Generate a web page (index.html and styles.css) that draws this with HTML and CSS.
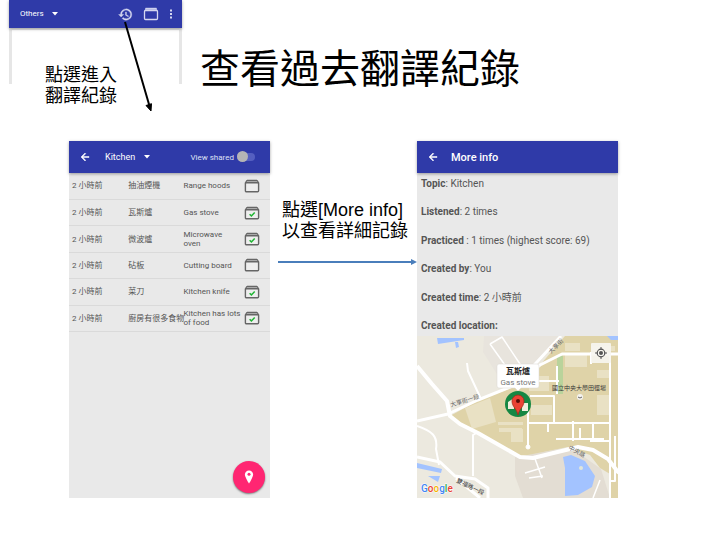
FILE: index.html
```
<!DOCTYPE html>
<html lang="zh-Hant">
<head>
<meta charset="utf-8">
<meta name="viewport" content="width=device-width, initial-scale=1">
<title>查看過去翻譯紀錄</title>
<link rel="stylesheet" href="styles.css">
</head>
<body>
<svg class="defs" width="0" height="0" aria-hidden="true">
  <symbol id="caret" viewBox="0 0 6 4"><path d="M0 0h6L3 3.600z" fill="#fff"/></symbol>
  <symbol id="back" viewBox="0 0 24 24"><path d="M20 11H7.830l5.590-5.590L12 4l-8 8 8 8 1.410-1.410L7.830 13H20z" fill="#fff" stroke="#fff"/></symbol>
  <symbol id="box" viewBox="0 0 16 14"><path d="M3 1h10l1 3H2z" fill="#aaa"/><path d="M3 1.300h10M3 1.300L1.500 3.700h13L13 1.300" fill="none" stroke="#666" stroke-width="1.200"/><rect x="1.400" y="3.700" width="13.200" height="9" rx="1" fill="#eee" stroke="#666" stroke-width="1.400"/></symbol>
  <symbol id="box-done" viewBox="0 0 16 14"><use href="#box"/><path d="M5.600 8.200l1.800 1.700 3.300-3.400" fill="none" stroke="#20b534" stroke-width="1.500"/></symbol>
</svg>
<div class="slide">
  <header class="top">
    <section class="snippet">
      <div class="bar bar-small">
        <label class="picker picker-small"><select aria-label="Topic"><option>Others</option></select><svg class="caret"><use href="#caret"/></svg></label>
        <button class="icon-btn" aria-label="History"><svg class="history" viewBox="0 0 24 24"><path d="M13 3a9 9 0 0 0-9 9H1l4 4 4-4H6a7 7 0 1 1 2.060 4.940l-1.420 1.420A9 9 0 1 0 13 3zm-1 5v5l4.280 2.540.720-1.210-3.500-2.080V8z" fill="#d5d7f0" stroke="#d5d7f0" stroke-width=".6"/></svg></button>
        <button class="icon-btn" aria-label="Cards"><svg class="cards" viewBox="0 0 16 14"><path d="M2.500 1h11l1.200 3H1.300z" fill="#aeb2e3"/><path d="M2.500 1.300h11" stroke="#d5d7f0"/><rect x="1.500" y="3.500" width="13" height="9" rx="1" fill="none" stroke="#d5d7f0" stroke-width="1.300"/></svg></button>
        <button class="icon-btn" aria-label="More"><svg class="dots" viewBox="0 0 4 12"><path d="M1 1.500h2v2H1zM1 5h2v2H1zM1 8.500h2v2H1z" fill="#d5d7f0"/></svg></button>
      </div>
      <div class="snippet-body"><p class="note">點選進入<br>翻譯紀錄</p></div>
      <svg class="pointer" viewBox="0 0 32 94" aria-hidden="true"><path d="M2 1L26.500 85" stroke="#000" stroke-width="2"/><path d="M28 90l-5-5.500 5.500-1.800z" stroke="#000"/></svg>
    </section>
    <h1>查看過去翻譯紀錄</h1>
  </header>

  <main class="stage">
    <section class="phone">
      <div class="bar">
        <button class="icon-btn" aria-label="Back"><svg class="back"><use href="#back"/></svg></button>
        <label class="picker"><select aria-label="Topic"><option>Kitchen</option></select><svg class="caret"><use href="#caret"/></svg></label>
        <label class="shared">View shared<input type="checkbox"></label>
      </div>
      <table>
        <tbody>
          <tr><td>2 小時前</td><td>抽油煙機</td><td>Range hoods</td><td><svg class="box"><use href="#box"/></svg></td></tr>
          <tr><td>2 小時前</td><td>瓦斯爐</td><td>Gas stove</td><td><svg class="box"><use href="#box-done"/></svg></td></tr>
          <tr><td>2 小時前</td><td>微波爐</td><td>Microwave<br>oven</td><td><svg class="box"><use href="#box-done"/></svg></td></tr>
          <tr><td>2 小時前</td><td>砧板</td><td>Cutting board</td><td><svg class="box"><use href="#box"/></svg></td></tr>
          <tr><td>2 小時前</td><td>菜刀</td><td>Kitchen knife</td><td><svg class="box"><use href="#box-done"/></svg></td></tr>
          <tr><td>2 小時前</td><td>廚房有很多食物</td><td>Kitchen has lots<br>of food</td><td><svg class="box"><use href="#box-done"/></svg></td></tr>
        </tbody>
      </table>
      <button class="fab" aria-label="Show on map"><svg viewBox="0 0 10 14"><path d="M5 .5C2.600.5.900 2.300.900 4.500.900 7.300 5 13.500 5 13.500S9.100 7.300 9.100 4.500C9.100 2.300 7.400.5 5 .5z" fill="#fff"/><circle cx="5" cy="4.300" r="1.500" fill="#ff2672"/></svg></button>
    </section>

    <div class="step">
      <p class="note">點選[More info]<br>以查看詳細記錄</p>
      <div class="arrow" aria-hidden="true"></div>
    </div>

    <section class="phone">
      <div class="bar">
        <button class="icon-btn" aria-label="Back"><svg class="back"><use href="#back"/></svg></button>
        <h2>More info</h2>
      </div>
      <div class="info">
        <p><b>Topic</b>: Kitchen</p>
        <p><b>Listened</b>: 2 times</p>
        <p><b>Practiced</b> : 1 times (highest score: 69)</p>
        <p><b>Created by</b>: You</p>
        <p><b>Created time</b>: 2 小時前</p>
        <p><b>Created location:</b></p>
      </div>
      <svg class="map" viewBox="0 0 201 162" role="img" aria-label="Map">
        <rect width="201" height="162" fill="#ece9df"/>
        <path d="M67 0h75l-20 27-34 24-22-35z" fill="#e8e4dd"/>
        <path d="M98 121l55-10 31 22 9 29H106l-8-22z" fill="#e3ddd3"/>
        <path d="M33 80l29-16 38-14 23-21L148 0h53v162h-8v-24l-10-6-10-13-22-8-45 9-13-3-33-20-17-10z" fill="#dfd3a8"/>
        <path d="M48 72l25-10 6 24-24 7z" fill="#e9e1c4"/>
        <path d="M20 2h27v2L21 8zM38 6h3l1 5-3 1z" fill="#a3c3ff"/>
        <path d="M0 127l25 6-1 4-24-5zM11 140h12l-2 6z" fill="#a3c3ff"/>
        <path d="M146 121l8-2 14 6 10 15-3 11-14 8-13 1V132z" fill="#a3c3ff"/>
        <circle cx="164" cy="132" r="2" fill="#dfe5dc"/>
        <path d="M140 20h6v38h-6z" fill="#b9d39b"/>
        <path d="M190 0h11v4h-7z" fill="#a3c3ff"/>
        <g fill="#e9e1c4">
          <path d="M148 19h22v12h-22zM148 7h15v8h-15zM180 34h12v8h-12zM180 59h12v20h-12zM112 40h20v15h-20zM174 10h24v5h-24z"/>
          <path d="M81 86h25v3H81zM82 92h23v4H82zM94 93h12v13H94zM114 69h21v10h-21z"/>
        </g>
        <g fill="none" stroke="#fff" stroke-linejoin="round">
          <path d="M111 45h31M113 60h24v27M140 30v28M174 16v12M156 85v20M176 86v17M139 103h48M193 17v130M193 87h-40M193 105h-20M111 62v48M110 87h65M131 86v10M163 92v10M193 138v24M198 100v45h-6M180 116l10 6" stroke-width="2"/>
          <circle cx="111" cy="111" r="2" fill="#fff"/>
          <path d="M73 8l12-7 20 30M73 8l20 28M117 120l8 22M108 137l20-6M112 142l14-2M183 144l-7 18" stroke-width="1.500"/>
          <path d="M50 27l1 8 13 28M56 140V99l5-3M0 90c15 5 21 10 19 23l3 16" stroke-width="2"/>
          <path d="M0 30l15 18 15 17 3 15 10 8 18 9 42 24 13 1 45-11 15 3 15 9 10 13 9 5" stroke-width="4"/>
          <path d="M0 85l31-7 30-14 37-15 22-23L144 0M101 47l22-18 22-11h56M0 121l23 5 15 14 20 3 13 9v10M39 142l12 10 12 10" stroke-width="3"/>
        </g>
        <g class="map-text">
          <text transform="translate(34 71) rotate(-17)">大享街一段</text>
          <text transform="translate(134 18) rotate(-45)">大享街</text>
          <text transform="translate(151 113) rotate(28)">中央路</text>
          <text class="dark" transform="translate(39 146) rotate(26)">雙福路一段</text>
          <text class="dark" x="135" y="54">國立中央大學田徑場</text>
        </g>
        <circle cx="163" cy="61" r="3" fill="#f5f3ef"/><path d="M161 61l2 1 2-1" fill="none" stroke="#666"/>
        <circle cx="101" cy="68" r="13" fill="#168743"/>
        <path d="M91 66l6-4v11h-6zM105 67h6v8h-6z" fill="#f0eddd"/>
        <path d="M101 79c-1-6-6-8-6-14a6 6 0 0 1 12 0c0 6-5 8-6 14z" fill="#ea4335" stroke="#a52714" stroke-width=".7"/><circle cx="101" cy="65" r="2" fill="#5a0c08"/>
        <path d="M82 28h38a2 2 0 0 1 2 2v20a2 2 0 0 1-2 2h-16l-3 3-3-3H82a2 2 0 0 1-2-2V30a2 2 0 0 1 2-2z" fill="#fff" stroke="#d8d6d0" stroke-width=".5"/>
        <text class="pin-title" x="101" y="38">瓦斯爐</text>
        <text class="pin-sub" x="101" y="49">Gas stove</text>
        <rect x="174" y="7" width="20" height="20" rx="1" fill="#f7f6f1" opacity=".9"/>
        <g fill="none" stroke="#555"><circle cx="184" cy="17" r="3.800" stroke-width="1.200"/><path d="M184 11v3M184 20v3M178 17h3M187 17h3"/></g><circle cx="184" cy="17" r="2" fill="#555"/>
        <text class="google" x="4" y="156"><tspan fill="#4285f4">G</tspan><tspan fill="#ea4335">o</tspan><tspan fill="#f4b400">o</tspan><tspan fill="#4285f4">g</tspan><tspan fill="#34a853">l</tspan><tspan fill="#ea4335">e</tspan></text>
      </svg>
    </section>
  </main>
</div>
</body>
</html>
```
FILE: styles.css
```
* { box-sizing: border-box; }
body {
  margin: 0;
  background: #fff;
  color: #000;
  font-family: "Liberation Sans", "Noto Sans CJK TC", sans-serif;
}
h1, h2, p { margin: 0; }
button { border: 0; padding: 0; background: none; cursor: pointer; }
svg { display: block; }
.defs { position: absolute; }

.top {
  display: grid;
  grid-template-columns: 9fr 173fr 18fr 520fr;
  min-height: 141px;
  align-items: start;
}
.snippet { grid-column: 2; position: relative; }
.top h1 {
  grid-column: 4;
  padding-top: 39px;
  font-size: 40px;
  line-height: 60px;
  font-weight: 400;
}
.note { font-size: 18px; line-height: 21px; white-space: nowrap; }
.snippet-body {
  height: 56px;
  padding: 35px 0 0 33px;
  border: solid #e6e6e6;
  border-width: 2px 3px 0;
}
.pointer { position: absolute; left: 114px; top: 21px; width: 32px; height: 94px; }

.bar {
  position: relative;
  display: flex;
  align-items: center;
  height: 32px;
  padding: 0 15px 0 10px;
  background: #2f3aa8;
  color: #fff;
  box-shadow: 0 1px 3px rgba(0, 0, 0, .35);
  font-family: Roboto, sans-serif;
}
.bar-small { height: 28px; padding: 0 9px 0 11px; gap: 10px; }
.bar h2 { margin-left: 12px; font-size: 11px; font-weight: 500; }
.back { width: 12px; height: 12px; }
.picker { display: flex; align-items: center; gap: 8px; margin-left: 14px; }
.picker select {
  appearance: none;
  border: 0;
  padding: 0;
  background: none;
  color: inherit;
  font: 400 9px/14px Roboto, sans-serif;
}
.picker-small { margin: 0 auto 0 0; }
.picker-small select { font-size: 8px; }
.caret { width: 6px; height: 4px; }
.history { width: 15px; height: 15px; }
.cards { width: 16px; height: 14px; }
.dots { width: 4px; height: 12px; }
.shared {
  display: flex;
  align-items: center;
  gap: 3px;
  margin-left: auto;
  font-size: 8px;
  color: #dfe1f5;
}
.shared input {
  appearance: none;
  position: relative;
  width: 18px;
  height: 8px;
  margin: 0;
  border-radius: 4px;
  background: #555fc0;
}
.shared input::before {
  content: "";
  position: absolute;
  left: 0;
  top: -2px;
  width: 11px;
  height: 11px;
  border-radius: 50%;
  background: #b5b5b5;
}

.stage {
  display: grid;
  grid-template-columns: 201fr 147fr 201fr;
  margin: 0 calc(102 / 720 * 100%) 0 calc(69 / 720 * 100%);
}
.phone {
  position: relative;
  min-height: 357px;
  background: #e9e9e9;
  color: #555;
  font-family: Roboto, "Noto Sans CJK TC", sans-serif;
}
table {
  width: 100%;
  height: 159px;
  table-layout: fixed;
  border-collapse: collapse;
  font-size: 8px;
  line-height: 9px;
}
td { height: 26px; padding: 0 0 0 3px; border-bottom: 1px solid #dadada; white-space: nowrap; }
td:nth-child(1), td:nth-child(2) { width: 28%; }
td:nth-child(3) { width: 30%; padding-left: 2px; }
td:nth-child(4) { padding-left: 2px; }
.box { width: 16px; height: 14px; }
.fab {
  position: absolute;
  right: 5px;
  bottom: 5px;
  display: grid;
  place-items: center;
  width: 32px;
  height: 32px;
  border-radius: 50%;
  background: #ff2672;
  box-shadow: 0 1px 2px rgba(0, 0, 0, .5);
}
.fab svg { width: 10px; height: 14px; }

.step { padding: 59px 0 0 8px; }
.step .note { padding-left: 4px; }
.arrow {
  display: flex;
  align-items: center;
  margin-top: 17px;
}
.arrow::before { content: ""; flex: 1; height: 2px; background: #4a7ebb; }
.arrow::after {
  content: "";
  border: solid transparent;
  border-width: 3px 0 3px 6px;
  border-left-color: #4a7ebb;
}

.info {
  display: flex;
  flex-direction: column;
  justify-content: space-between;
  min-height: 163px;
  padding: 1px 0 0 4px;
  font-size: 10px;
  line-height: 20px;
}
.map { width: 100%; }
.map-text { font-size: 6px; fill: #666; }
.map-text .dark { fill: #333; }
.pin-title { font-size: 8px; font-weight: 700; fill: #222; text-anchor: middle; }
.pin-sub { font-size: 8px; fill: #777; text-anchor: middle; }
.google { font: 500 10px Roboto, sans-serif; stroke: #fff; stroke-width: 1px; paint-order: stroke; }
```
